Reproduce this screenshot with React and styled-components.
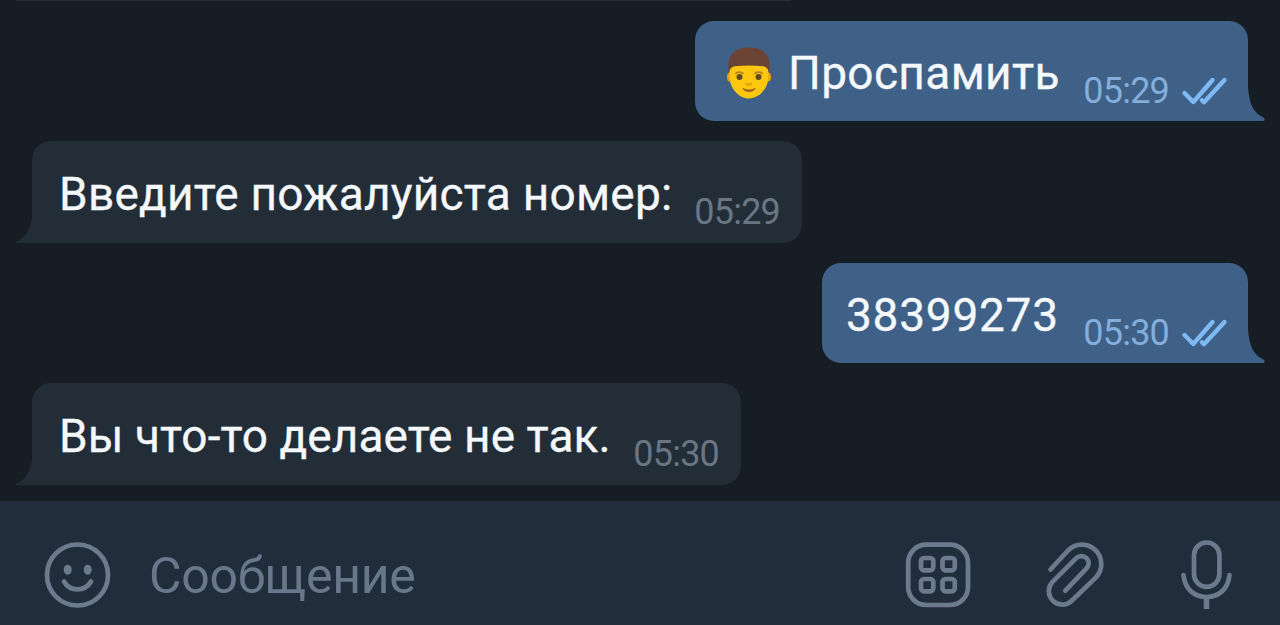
import React from "react";
import styled, { createGlobalStyle } from "styled-components";

const GlobalStyle = createGlobalStyle`
  * {
    box-sizing: border-box;
  }
  body {
    margin: 0;
    background: #161d25;
    overflow: hidden;
  }
`;

const messages = [
  { id: 1, out: true, emoji: true, text: "Проспамить", time: "05:29", width: 553, height: 100, indent: 93, spacing: 0.35 },
  { id: 2, text: "Введите пожалуйста номер:", time: "05:29", width: 770, height: 102, indent: 27, spacing: 0.22 },
  { id: 3, out: true, text: "38399273", time: "05:30", width: 426, height: 100, indent: 24, spacing: 0.75 },
  { id: 4, text: "Вы что-то делаете не так.", time: "05:30", width: 709, height: 102, indent: 27, spacing: 0.07 },
];

function ManEmoji() {
  return (
    <Emoji viewBox="0 0 46 54">
      <ellipse cx="3.5" cy="31" rx="2.5" ry="4.500" fill="#e59d13" />
      <ellipse cx="42.5" cy="31" rx="2.5" ry="4.500" fill="#e59d13" />
      <path d="M3.500 22C4 11 10 8 23 8s19 3 19.500 14v8c0 12-9 22.500-19.500 22.500S3.500 42 3.500 30Z" fill="#fdc70f" />
      <path d="M2.500 27.500V19C2.500 7 11 1.500 23 1.500S43.500 7 43.500 19v8.500C42 23 40.500 20.500 37 20.200 28 19.300 18 19.300 9 20.200 5.500 20.500 4 23 2.500 27.500Z" fill="#6a4334" />
      <path d="M9.500 28c1.500-2.500 6-2.500 8 0M28.500 28c2-2.500 6.500-2.500 8 0" fill="none" stroke="#b47e1c" strokeWidth="1.800" />
      <circle cx="13.500" cy="31" r="3" fill="#5d4a1f" />
      <circle cx="32.500" cy="31" r="3" fill="#5d4a1f" />
      <path d="M20 37.500c2 1.500 4 1.500 6 0" fill="none" stroke="#e59600" strokeWidth="1.800" />
      <path d="M17 42.500c4 2 8 2 12 0-2 4-10 4-12 0Z" fill="#a3601f" stroke="#a3601f" />
    </Emoji>
  );
}

function Checks() {
  return (
    <CheckIcon viewBox="0 0 46 28">
      <path d="M4.500 16 13.300 25 32.500 3M22 23.300 24 25.200 44.500 3" />
    </CheckIcon>
  );
}

function Message({ out, emoji, text, time, width, height, indent, spacing }) {
  return (
    <Bubble $out={out} $width={width} $height={height} $indent={indent}>
      {emoji && <ManEmoji />}
      <Text $spacing={spacing}>{text}</Text>
      <Meta $out={out}>
        {time}
        {out && <Checks />}
      </Meta>
      <Tail $out={out} viewBox="0 0 17 34">
        {out ? (
          <path d="M0 0V34H15Q17 34 16.500 31.500L14.500 30C6 26 1 17 0 0Z" />
        ) : (
          <path d="M17 0V34H0L0 33C9 29 16 20 17 0Z" />
        )}
      </Tail>
    </Bubble>
  );
}

export default function App() {
  return (
    <Screen>
      <GlobalStyle />
      <PreviousEdge />
      <Chat>
        {messages.map((m) => (
          <Message key={m.id} {...m} />
        ))}
      </Chat>
      <InputBar>
        <BarIcon viewBox="0 0 68 68">
          <circle cx="34.500" cy="34" r="30.500" />
          <ellipse cx="24.700" cy="28.700" rx="4" ry="5" fill="#6c7b8c" stroke="none" />
          <ellipse cx="44.700" cy="28.700" rx="4" ry="5" fill="#6c7b8c" stroke="none" />
          <path d="M21 40.500c6 10.500 21 10.500 27 0" />
        </BarIcon>
        <Placeholder>Сообщение</Placeholder>
        <Actions>
          <BarIcon viewBox="0 0 68 68">
            <rect x="3.200" y="3.700" width="59.800" height="60.300" rx="18" />
            <rect x="16" y="17" width="12.300" height="12.300" rx="3" />
            <rect x="37.500" y="17" width="12.300" height="12.300" rx="3" />
            <rect x="16" y="38" width="12.300" height="12.300" rx="3" />
            <rect x="37.500" y="38" width="12.300" height="12.300" rx="3" />
          </BarIcon>
          <BarIcon viewBox="0 0 68 68">
            <path d="M11.500 28.500 29 9.500A19.300 19.300 0 0 1 56.800 36.600L32.200 60.300A13.500 13.500 0 0 1 13.200 41.200L37.300 17.200A7.200 7.200 0 0 1 47.500 27.400L26.300 49.700" />
          </BarIcon>
          <BarIcon viewBox="0 0 68 68">
            <rect x="21" y="1.500" width="25.400" height="44.300" rx="12.700" />
            <path d="M10.500 34C12 49 22 56 33.500 56S55 49 56.500 34" />
            <path d="M33.500 56V68" strokeWidth="5.500" strokeLinecap="butt" />
          </BarIcon>
        </Actions>
      </InputBar>
    </Screen>
  );
}

const Screen = styled.div`
  display: flex;
  flex-direction: column;
  width: 1280px;
  height: 625px;
  background: #161d25;
  font-family: Roboto, "Noto Sans", sans-serif;
  overflow: hidden;
`;

/* bottom edge of the message scrolled off the top */
const PreviousEdge = styled.div`
  flex: none;
  width: 775px;
  height: 1px;
  margin-left: 16px;
  background: #222d38;
`;

const Chat = styled.main`
  display: flex;
  flex-direction: column;
  gap: 20px;
  height: 500px;
  padding: 20px 32px 0;
`;

const Bubble = styled.div`
  position: relative;
  flex: none;
  display: flex;
  align-items: flex-start;
  align-self: ${(p) => (p.$out ? "flex-end" : "flex-start")};
  width: ${(p) => p.$width}px;
  height: ${(p) => p.$height}px;
  padding: ${(p) => (p.$out ? 24 : 25)}px 22px 0 ${(p) => p.$indent}px;
  border-radius: ${(p) => (p.$out ? "19px 19px 0 19px" : "19px 19px 19px 0")};
  background: ${(p) => (p.$out ? "#3f6188" : "#222d38")};
`;

const Text = styled.span`
  color: #f5f8fb;
  font-size: 46px;
  line-height: 56px;
  letter-spacing: ${(p) => p.$spacing}px;
  white-space: nowrap;
  -webkit-text-stroke: 0.3px #f5f8fb;
`;

const Meta = styled.span`
  display: flex;
  align-items: center;
  gap: 11px;
  margin: 26px 0 0 auto;
  color: ${(p) => (p.$out ? "#84aedb" : "#697684")};
  font-size: 36px;
  line-height: 40px;
  letter-spacing: -0.8px;
`;

const CheckIcon = styled.svg`
  width: 46px;
  height: 28px;
  fill: none;
  stroke: #7fb9f3;
  stroke-width: 4.4;
  stroke-linecap: round;
  stroke-linejoin: round;
  overflow: visible;
`;

const Tail = styled.svg`
  position: absolute;
  bottom: 0;
  ${(p) => (p.$out ? "right: -16.500px;" : "left: -16.500px;")}
  width: 17px;
  height: 34px;
  fill: ${(p) => (p.$out ? "#3f6188" : "#222d38")};
`;

const Emoji = styled.svg`
  position: absolute;
  left: 31px;
  top: 25px;
  width: 46px;
  height: 54px;
`;

const InputBar = styled.footer`
  display: flex;
  align-items: center;
  flex: 1;
  padding: 24px 39px 0 43px;
  background: #222d3b;
`;

const Placeholder = styled.span`
  margin: 1px 0 0 38px;
  color: #68788a;
  font-size: 50px;
  line-height: 60px;
  letter-spacing: -0.3px;
`;

const Actions = styled.div`
  display: flex;
  gap: 66px;
  margin-left: auto;
`;

const BarIcon = styled.svg`
  width: 68px;
  height: 68px;
  fill: none;
  stroke: #6c7b8c;
  stroke-width: 4.7;
  stroke-linecap: round;
  stroke-linejoin: round;
  overflow: visible;
`;
